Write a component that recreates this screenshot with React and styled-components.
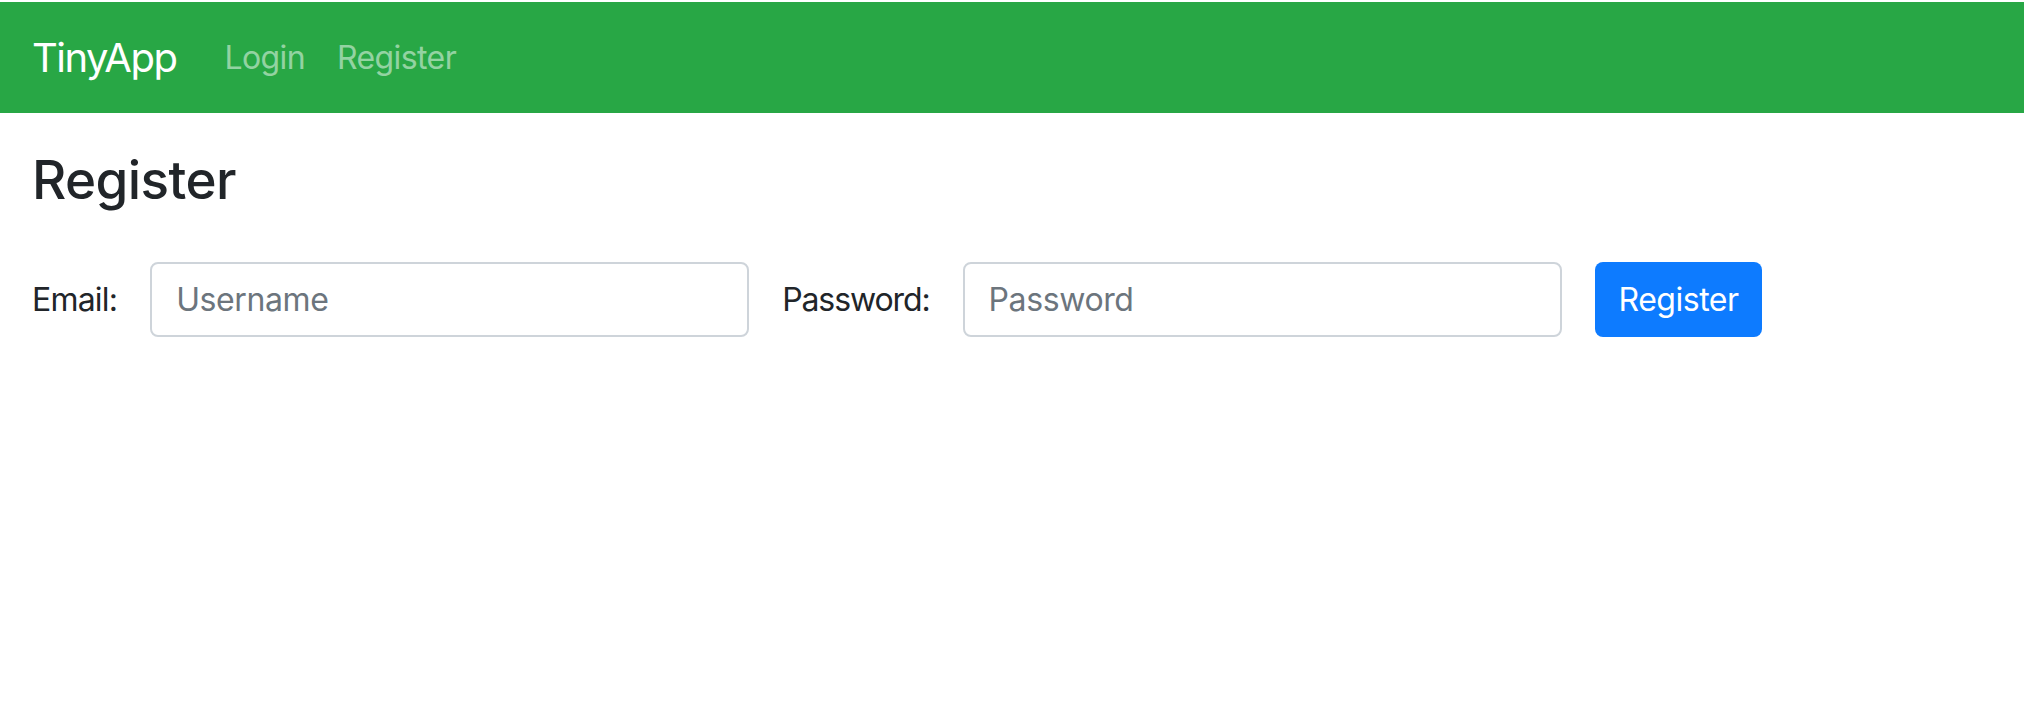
import React from 'react';
import styled, { createGlobalStyle } from 'styled-components';

const GlobalStyle = createGlobalStyle`
  body {
    margin: 0;
    padding-top: 2px;
    background: #fff;
    color: #212529;
    font-family: Inter, "Noto Sans", "Liberation Sans", sans-serif;
  }
  * { box-sizing: border-box; }
`;

const Navbar = styled.nav`
  display: flex;
  align-items: center;
  height: 111px;
  padding: 0 32px;
  background: #28a745;
`;

const Brand = styled.a`
  color: #fff;
  font-size: 40px;
  letter-spacing: -1.5px;
  margin-right: 32px;
  text-decoration: none;
`;

const NavLink = styled.a`
  color: rgba(255, 255, 255, 0.5);
  font-size: 32px;
  letter-spacing: -0.6px;
  padding: 0 16px;
  text-decoration: none;
`;

const Main = styled.main`
  padding: 0 32px;
`;

const Title = styled.h3`
  margin: 36px 0 16px;
  font-size: 53px;
  font-weight: 500;
  line-height: 1.2;
  letter-spacing: -0.6px;
`;

const Form = styled.form`
  display: flex;
  align-items: center;
  margin-top: 49px;
`;

const Label = styled.label`
  font-size: 32px;
  letter-spacing: ${p => (p.$tight ? '-1.1px' : '-0.8px')};
  margin-right: 33px;
`;

const Input = styled.input`
  width: 599px;
  height: 75px;
  padding: 0 24px;
  margin-right: 33px;
  font-family: inherit;
  font-size: 32px;
  letter-spacing: -0.4px;
  color: #495057;
  border: 2px solid #ced4da;
  border-radius: 8px;
  &::placeholder { color: #6c757d; }
`;

const Button = styled.button`
  height: 75px;
  padding: 0 24px;
  font-family: inherit;
  font-size: 32px;
  letter-spacing: -0.5px;
  color: #fff;
  background: #0d7bff;
  border: none;
  border-radius: 8px;
`;

export default function App() {
  return (
    <>
      <GlobalStyle />
      <Navbar>
        <Brand href="#">TinyApp</Brand>
        <NavLink href="#">Login</NavLink>
        <NavLink href="#">Register</NavLink>
      </Navbar>
      <Main>
        <Title>Register</Title>
        <Form onSubmit={e => e.preventDefault()}>
          <Label>Email:</Label>
          <Input type="email" placeholder="Username" />
          <Label $tight>Password:</Label>
          <Input type="password" placeholder="Password" />
          <Button type="submit">Register</Button>
        </Form>
      </Main>
    </>
  );
}
